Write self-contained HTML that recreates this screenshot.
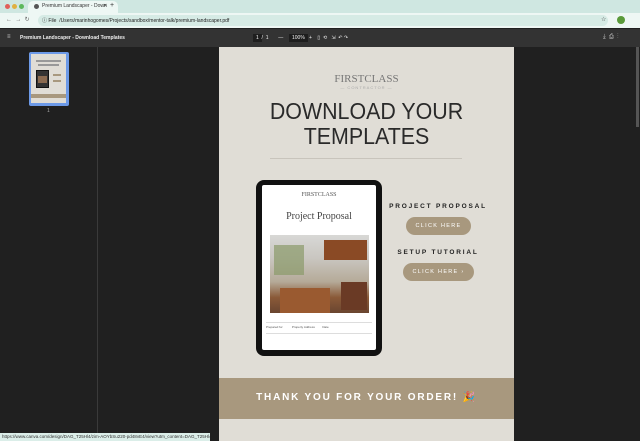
<!DOCTYPE html><html><head><style>
*{margin:0;padding:0;box-sizing:border-box}
body{width:640px;height:441px;overflow:hidden;background:#202020;font-family:"Liberation Sans",sans-serif;position:relative}
.a{position:absolute}
</style></head><body>
<div class="a" style="left:0;top:0;width:640px;height:28px;background:#cfe7e1"></div>
<div class="a" style="left:28px;top:1px;width:90px;height:12px;background:#eef7f4;border-radius:5px 5px 0 0"></div>
<div class="a" style="left:5px;top:4px;width:5px;height:5px;border-radius:50%;background:#e0605a"></div>
<div class="a" style="left:12px;top:4px;width:5px;height:5px;border-radius:50%;background:#e0b040"></div>
<div class="a" style="left:19px;top:4px;width:5px;height:5px;border-radius:50%;background:#5cb85c"></div>
<div class="a" style="left:34px;top:4px;width:5px;height:5px;border-radius:50%;background:#555"></div>
<div class="a" style="left:42px;top:3px;font-size:5px;color:#333;white-space:nowrap">Premium Landscaper - Down</div>
<div class="a" style="left:103px;top:3px;font-size:5px;color:#333">✕</div>
<div class="a" style="left:110px;top:2px;font-size:7px;color:#333">+</div>
<div class="a" style="left:0;top:13px;width:640px;height:15px;background:#eef7f4"></div>
<div class="a" style="left:6px;top:16px;font-size:6px;color:#666">←&nbsp; →&nbsp; ↻</div>
<div class="a" style="left:38px;top:15px;width:570px;height:11px;background:#d6ebe5;border-radius:6px"></div>
<div class="a" style="left:42px;top:17px;font-size:5px;color:#222">ⓘ File &nbsp;<span>/Users/marinhogomes/Projects/sandbox/mentor-talk/premium-landscaper.pdf</span></div>
<div class="a" style="left:601px;top:16px;font-size:6px;color:#444">☆</div>
<div class="a" style="left:617px;top:16px;width:8px;height:8px;border-radius:50%;background:#5a9a3a"></div>
<div class="a" style="left:0;top:29px;width:640px;height:18px;background:#333"></div>
<div class="a" style="left:7px;top:34px;font-size:6px;color:#ccc">≡</div>
<div class="a" style="left:20px;top:35px;font-size:5px;color:#eee;font-weight:bold">Premium Landscaper - Download Templates</div>
<div class="a" style="left:253px;top:34px;width:9px;height:8px;background:#1e1e1e"></div>
<div class="a" style="left:256px;top:35px;font-size:5px;color:#eee">1 &nbsp;/ &nbsp;1 &nbsp;&nbsp;&nbsp;&nbsp;&nbsp;&nbsp;— &nbsp;</div>
<div class="a" style="left:289px;top:34px;width:19px;height:8px;background:#1e1e1e"></div>
<div class="a" style="left:292px;top:35px;font-size:5px;color:#eee">100% &nbsp;&nbsp;+ &nbsp;&nbsp;&nbsp;▯ &nbsp;⟲ &nbsp;&nbsp;⇲ &nbsp;↶ ↷</div>
<div class="a" style="left:603px;top:34px;font-size:6px;color:#ccc">⤓ &nbsp;⎙ &nbsp;⋮</div>
<div class="a" style="left:97px;top:47px;width:1px;height:394px;background:#3a3a3a"></div>
<div class="a" style="left:29px;top:52px;width:40px;height:54px;background:#6d9ae8;border-radius:2px"></div>
<div class="a" style="left:31px;top:54px;width:35px;height:49px;background:#e0ddd6"></div>
<div class="a" style="left:36px;top:60px;width:25px;height:2px;background:#999"></div>
<div class="a" style="left:38px;top:64px;width:21px;height:2px;background:#999"></div>
<div class="a" style="left:31px;top:94px;width:35px;height:4px;background:#a8987e"></div>
<div class="a" style="left:36px;top:70px;width:13px;height:18px;background:#333;border:1px solid #111"></div>
<div class="a" style="left:38px;top:76px;width:9px;height:7px;background:#8a6a50"></div>
<div class="a" style="left:53px;top:74px;width:8px;height:2px;background:#a8987e"></div>
<div class="a" style="left:53px;top:80px;width:8px;height:2px;background:#a8987e"></div>
<div class="a" style="left:47px;top:108px;font-size:5px;color:#aaa">1</div>
<div class="a" style="left:219px;top:47px;width:295px;height:394px;background:#e0ddd6"></div>
<div class="a" style="left:219px;top:73px;width:295px;text-align:center;font-family:'Liberation Serif',serif;font-size:11px;color:#777">FIRSTCLASS</div>
<div class="a" style="left:219px;top:85px;width:295px;text-align:center;font-size:4px;color:#aaa;letter-spacing:1px">— CONTRACTOR —</div>
<div class="a" style="left:219px;top:99px;width:295px;text-align:center;font-size:23px;line-height:25px;color:#2a2a2a;transform:scaleX(.93)">DOWNLOAD YOUR<br>TEMPLATES</div>
<div class="a" style="left:270px;top:158px;width:192px;height:1px;background:#c8c4bc"></div>
<div class="a" style="left:256px;top:180px;width:126px;height:176px;background:#111;border-radius:8px"></div>
<div class="a" style="left:262px;top:185px;width:114px;height:165px;background:#fff;border-radius:2px"></div>
<div class="a" style="left:262px;top:192px;width:114px;text-align:center;font-family:'Liberation Serif',serif;font-size:6px;color:#555">FIRSTCLASS</div>
<div class="a" style="left:262px;top:211px;width:114px;text-align:center;font-family:'Liberation Serif',serif;font-size:10px;color:#444">Project Proposal</div>
<div class="a" style="left:270px;top:235px;width:99px;height:78px;background:linear-gradient(180deg,#d8d8d6 0%,#c9c6c0 30%,#b5aa98 60%,#8a5a38 80%,#6a4530 100%)"></div>
<div class="a" style="left:274px;top:245px;width:30px;height:30px;background:#8a9a6a;opacity:.7"></div>
<div class="a" style="left:324px;top:240px;width:43px;height:20px;background:#8a4a25"></div>
<div class="a" style="left:280px;top:288px;width:50px;height:25px;background:#9a5a30"></div>
<div class="a" style="left:341px;top:282px;width:26px;height:28px;background:#6a3a25"></div>
<div class="a" style="left:266px;top:322px;width:106px;height:12px;font-size:3px;color:#555;border-top:1px solid #ddd;border-bottom:1px solid #ddd;padding-top:2px">Prepared for &nbsp;&nbsp;&nbsp;&nbsp;&nbsp;&nbsp;&nbsp;&nbsp;&nbsp;&nbsp;Property Address &nbsp;&nbsp;&nbsp;&nbsp;&nbsp;&nbsp;&nbsp;&nbsp;Date</div>
<div class="a" style="left:378px;top:203px;width:120px;text-align:center;font-size:6.5px;letter-spacing:1.8px;color:#222;font-weight:bold;white-space:nowrap">PROJECT PROPOSAL</div>
<div class="a" style="left:406px;top:217px;width:65px;height:18px;border-radius:9px;background:#a8987e;color:#fff;font-size:5.5px;letter-spacing:1.3px;text-align:center;line-height:18px">CLICK HERE</div>
<div class="a" style="left:378px;top:249px;width:120px;text-align:center;font-size:6.5px;letter-spacing:1.8px;color:#222;font-weight:bold;white-space:nowrap">SETUP TUTORIAL</div>
<div class="a" style="left:403px;top:263px;width:71px;height:18px;border-radius:9px;background:#a8987e;color:#fff;font-size:5.5px;letter-spacing:1.3px;text-align:center;line-height:18px">CLICK HERE ›</div>
<div class="a" style="left:219px;top:378px;width:295px;height:41px;background:#a8987e"></div>
<div class="a" style="left:219px;top:392px;width:295px;text-align:center;color:#fff;font-size:10px;font-weight:bold;letter-spacing:1.8px;white-space:nowrap">THANK YOU FOR YOUR ORDER! 🎉</div>
<div class="a" style="left:0;top:433px;width:210px;height:8px;background:#dbeee9;font-size:4.5px;color:#333;padding:1px 2px;white-space:nowrap;overflow:hidden">https://www.canva.com/design/DAG_T25Hl4/zim-AOYbSu220-pd48vE4/view?utm_content=DAG_T25Hl4U&utm...</div>
<div class="a" style="left:636px;top:47px;width:3px;height:80px;background:#555"></div>
</body></html>
